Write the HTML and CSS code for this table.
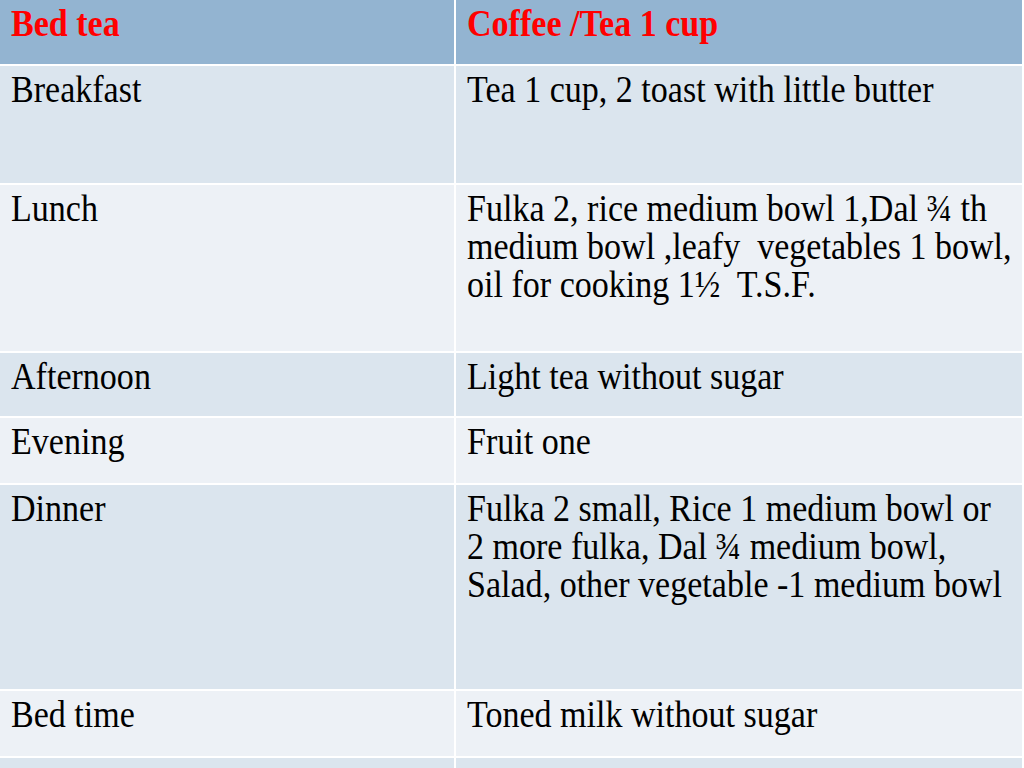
FILE: index.html
```html
<!DOCTYPE html>
<html>
<head>
<meta charset="utf-8">
<link rel="stylesheet" href="styles.css">
</head>
<body>
<div class="diet">
  <div class="cell head"><span class="txt">Bed tea</span></div>
  <div class="cell head"><span class="txt">Coffee /Tea 1 cup</span></div>

  <div class="cell band1"><span class="txt">Breakfast</span></div>
  <div class="cell band1"><span class="txt">Tea 1 cup, 2 toast with little butter</span></div>

  <div class="cell band2"><span class="txt">Lunch</span></div>
  <div class="cell band2"><span class="txt">Fulka 2, rice medium bowl 1,Dal ¾ th<br>medium bowl ,leafy&nbsp; vegetables 1 bowl,<br>oil for cooking 1½&nbsp; T.S.F.</span></div>

  <div class="cell band1"><span class="txt">Afternoon</span></div>
  <div class="cell band1"><span class="txt">Light tea without sugar</span></div>

  <div class="cell band2"><span class="txt">Evening</span></div>
  <div class="cell band2"><span class="txt">Fruit one</span></div>

  <div class="cell band1"><span class="txt">Dinner</span></div>
  <div class="cell band1"><span class="txt">Fulka 2 small, Rice 1 medium bowl or<br>2 more fulka, Dal ¾ medium bowl,<br>Salad, other vegetable -1 medium bowl</span></div>

  <div class="cell band2"><span class="txt">Bed time</span></div>
  <div class="cell band2"><span class="txt">Toned milk without sugar</span></div>

  <div class="cell band1"></div>
  <div class="cell band1"></div>
</div>
</body>
</html>
```

FILE: styles.css
```css
html, body {
  margin: 0;
  padding: 0;
  background: #ffffff;
  overflow: hidden;
}

.diet {
  display: grid;
  grid-template-columns: 454px 566px;
  grid-template-rows: 64px 117px 166px 63px 65px 204px 65px 10px;
  gap: 2px;
  background: #ffffff;
  width: 1022px;
  font-family: "Liberation Serif", "Times New Roman", serif;
  font-size: 37px;
  line-height: 38px;
  color: #000000;
}

.cell {
  padding: 5px 0 0 11px;
  white-space: nowrap;
  overflow: hidden;
}

.txt {
  display: inline-block;
  transform: scaleX(0.92);
  transform-origin: 0 0;
}

.head {
  background: #93b4d1;
  color: #ff0000;
  font-weight: bold;
}

.band1 {
  background: #dbe5ee;
}

.band2 {
  background: #edf1f6;
}
```
